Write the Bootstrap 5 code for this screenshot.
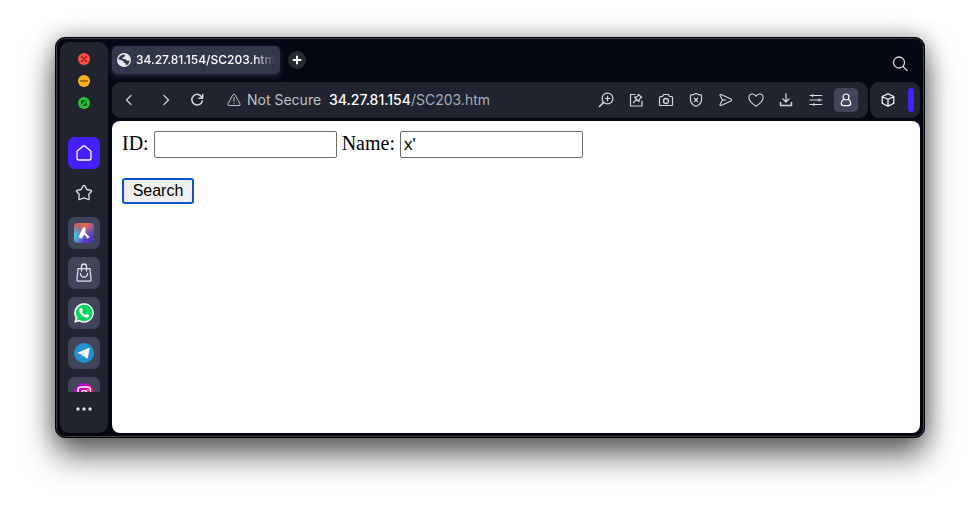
<!DOCTYPE html>
<html lang="en">
<head>
<meta charset="utf-8">
<meta name="viewport" content="width=device-width, initial-scale=1">
<title>34.27.81.154/SC203.htm</title>
<link rel="stylesheet" href="https://cdn.jsdelivr.net/npm/bootstrap@5.3.0/dist/css/bootstrap.min.css">
<style>
body{background:#fff;min-height:100vh;padding:37px 55px 73px;font-family:Inter,"Liberation Sans",sans-serif;overflow:hidden}
svg{display:block;fill:none;stroke:currentColor;stroke-width:1;stroke-linecap:round;stroke-linejoin:round}
svg.solid{stroke:none}
button{color:inherit}
.window{background:#050713;border:1px solid #000;border-radius:10px;padding:4px;gap:4px;box-shadow:inset 0 0 0 1px #3c3e48,0 18px 32px rgba(0,0,0,.58),0 0 22px rgba(0,0,0,.32)}
.sidebar{width:48px;background:#21232e;border-radius:9px;padding:11px 0 7px}
.lights{gap:10px;margin-bottom:28px}
.lights button,.tool,.side,.plus{border:0;padding:0;background:none;display:flex;align-items:center;justify-content:center;flex:none}
.lights button{width:12px;height:12px}
.sideapps{gap:8px;height:255px;overflow:hidden}
.side{width:32px;height:32px;border-radius:7px;color:#dfe1ea}
.side.tile{background:#41455a}
.side.active{background:#4520ff;color:#fff}
.side.more{height:34px}
.tabs{height:40px;padding:0 8px 0 0}
.tab-item{width:168px;height:28px;margin-top:4px;background:#33374b;border-radius:5px;padding:0 5px;gap:5px;color:#fff;box-shadow:0 2px 6px rgba(90,92,105,.45)}
.tab-title{font-size:12px;line-height:16px;font-weight:500;white-space:nowrap;overflow:hidden;-webkit-mask-image:linear-gradient(90deg,#000 85%,transparent);mask-image:linear-gradient(90deg,#000 85%,transparent)}
.plus{width:18px;height:18px;border-radius:50%;background:#292b33;margin:9px 0 0 8px;color:#fff}
.toolbars{gap:2px;margin-bottom:3px}
.toolbar{height:36px;background:#21232e;border-radius:9px}
.navtools{padding:0 10px 0 5px}
.tool{width:24px;height:24px;border-radius:5px;color:#d3d6da}
.actions{gap:6px}
.forward{margin:0 7px 0 13px}
.address{font-size:14px;line-height:20px;color:#bfc2c3;margin-left:18px;gap:6px;white-space:nowrap}
.address a{color:#9fb0ba;text-decoration:none;margin-left:2px}
.address strong{color:#fff;font-weight:500}
.profile{background:#41455a;color:#fff}
.extras{width:50px;padding:0 6px}
.accent{width:6px;height:24px;border-radius:3px;background:#4520ff}
.page{background:#fff;border-radius:8px;padding:10px;color:#000;font:20px/24px "Liberation Serif",serif}
.page input{width:183px;height:27px;border:1px solid #6b6b6b;border-radius:2px;padding:1px 3px;font:17px/20px "Liberation Sans",sans-serif;color:#000;outline:0}
.fields{gap:5px;margin-bottom:20px}
.search{border:2px solid #0756c9;border-radius:3px;background:#efefef;padding:0;font:16px/22px "Liberation Sans",sans-serif;color:#000;height:26px;width:72px}
</style>
</head>
<body class="d-flex flex-column">
<div class="window d-flex flex-grow-1">
  <aside class="sidebar d-flex flex-column align-items-center flex-shrink-0">
    <div class="lights d-flex flex-column">
      <button aria-label="Close"><svg width="12" height="12"><circle cx="6" cy="6" r="6" fill="#ff5148" stroke="none"/><path d="M3.500 3.500l5 5m0-5l-5 5" stroke="#8e1510" stroke-width="1.300"/></svg></button>
      <button aria-label="Minimize"><svg width="12" height="12"><circle cx="6" cy="6" r="6" fill="#ffb022" stroke="none"/><path d="M2.500 6h7" stroke="#8f5a0b" stroke-width="1.500"/></svg></button>
      <button aria-label="Full screen"><svg width="12" height="12"><circle cx="6" cy="6" r="6" fill="#28c135" stroke="none"/><path d="M3 7.800V4q0-1 1-1h3.800zM9 4.200V8q0 1-1 1H4.200z" fill="#0b6514" stroke="none"/></svg></button>
    </div>
    <nav class="sideapps d-flex flex-column" aria-label="Apps">
      <button class="side active" aria-label="Home"><svg width="20" height="20"><path d="M3.500 7.800Q3 8.300 3 9v6q0 2 2 2h10q2 0 2-2V9q0-.7-.5-1.200L11.300 3.400q-1.300-.9-2.600 0z" stroke-width="1.300"/></svg></button>
      <button class="side" aria-label="Bookmarks"><svg width="20" height="20"><path d="M10 2.300q.6 0 .9.600l2 3.600 4 .8q1.100.3.400 1.200l-2.600 3 .5 4.200q0 1.100-1 .8L10 14.900l-4.200 1.600q-1 .3-1-.8l.5-4.200-2.600-3q-.7-.9.400-1.200l4-.8 2-3.600q.3-.6.900-.6z" stroke-width="1.300"/></svg></button>
      <button class="side tile" aria-label="Aria"><svg class="solid" width="20" height="20"><defs><linearGradient id="ga" x1="0" y1="0" x2="1" y2="1"><stop stop-color="#df6351"/><stop offset=".5" stop-color="#6759b5"/><stop offset="1" stop-color="#4b24c5"/></linearGradient><radialGradient id="gb" cx="0" cy=".65" r=".55"><stop stop-color="#3ed0ed"/><stop offset="1" stop-color="#3ed0ed" stop-opacity="0"/></radialGradient><radialGradient id="gc" cx=".6" cy="0" r=".55"><stop stop-color="#ff6840"/><stop offset="1" stop-color="#ff6840" stop-opacity="0"/></radialGradient></defs><rect width="20" height="20" rx="4" fill="url(#ga)"/><rect width="20" height="20" rx="4" fill="url(#gb)"/><rect width="20" height="20" rx="4" fill="url(#gc)"/><path d="M8.800 4.500h2.700v5.200l4 4.300-2 1.600-3.300-4.200-2.500 4.200-3-1.400z" fill="#fff"/></svg></button>
      <button class="side tile" aria-label="Shopping"><svg width="20" height="20"><path d="M4 5.600h12l1 11.200q0 1.300-1.200 1.300H4.200q-1.200 0-1.200-1.300zM7.500 8V3.200Q7.500 1 10 1t2.500 2.200V8M6.300 10.500q.5 3.600 3.700 3.600t3.700-3.600" stroke-width="1.300"/></svg></button>
      <button class="side tile" aria-label="WhatsApp"><svg class="solid" width="20" height="20"><path d="M.3 19.800L1.600 15A9.800 9.800 0 1 1 5.200 18.500z" fill="#fff"/><path d="M2.300 17.700l1-3.100A8.300 8.300 0 1 1 5.500 16.800z" fill="#05d362"/><path d="M6.500 5.100q-.7.400-1.100 1.600-.5 3 3.200 6.100 3.600 2.900 6 1.200 1.200-.9.800-1.900l-2.200-1.200q-.5-.1-1.300 1-.5.400-2.100-.8-1.700-1.400-1.800-2.200l.9-1.400-1-2.200q-.5-.6-1.400-.2z" fill="#fff"/></svg></button>
      <button class="side tile" aria-label="Telegram"><svg class="solid" width="20" height="20"><circle cx="10" cy="10" r="10" fill="#248fd0"/><path d="M3 9.900L14.800 4.900q1-.2.800.9l-1.700 9q-.4 1-1.300.4L7.700 11.600z" fill="#fff"/><path d="M7.300 11.200L13 7.100 9 11.900l-1 3.200z" fill="#b9d8ec"/></svg></button>
      <button class="side tile" aria-label="Instagram"><svg width="20" height="20"><defs><linearGradient id="gi" x1="0" y1="0" x2="1" y2="1"><stop stop-color="#7a16f2"/><stop offset=".4" stop-color="#d800b0"/><stop offset=".7" stop-color="#ff0059"/></linearGradient></defs><circle cx="10" cy="10" r="10" fill="url(#gi)" stroke="none"/><rect x="4" y="4" width="12.500" height="12.500" rx="3" stroke="#fff" stroke-width="1.400"/><circle cx="10.200" cy="10.200" r="2.700" stroke="#fff" stroke-width="1.400"/><circle cx="13.900" cy="6.700" r=".8" fill="#fff" stroke="none"/></svg></button>
    </nav>
    <button class="side more" aria-label="More"><svg class="solid" width="20" height="20"><g fill="#dfe1ea"><circle cx="4" cy="10" r="1.700"/><circle cx="10" cy="10" r="1.700"/><circle cx="16" cy="10" r="1.700"/></g></svg></button>
  </aside>
  <div class="d-flex flex-column flex-grow-1">
    <div class="tabs d-flex align-items-start">
      <div class="tab-item d-flex align-items-center">
        <svg class="solid flex-shrink-0" width="14" height="14"><circle cx="7" cy="7" r="7" fill="#e6e8ea"/><path d="M6.300 1.400L8.200 2 7.700 3.600 6 4.500 5.500 6h2.700l1.300 1.500 2.900.2q.1 3.100-3.300 4.500L8.200 10l-1.500-.5-.4-1.600L3.800 7 1.300 6.300Q1.900 2.700 6.300 1.400z" fill="#353a4c"/></svg>
        <span class="tab-title">34.27.81.154/SC203.htm</span>
      </div>
      <button class="plus" aria-label="New tab"><svg width="10" height="10"><path d="M5 1.500v7M1.500 5h7" stroke-width="2"/></svg></button>
      <button class="tool ms-auto mt-2" aria-label="Search tabs"><svg class="mt-1" width="18" height="18"><circle cx="8" cy="7.500" r="5.500" stroke-width="1.300"/><path d="M12 11.500l4 4" stroke-width="1.300"/></svg></button>
    </div>
    <div class="toolbars d-flex">
      <div class="toolbar navtools d-flex align-items-center flex-grow-1">
        <button class="tool" aria-label="Back"><svg width="16" height="16"><path d="M10 3.500L5.500 8l4.500 4.500" stroke-width="1.200"/></svg></button>
        <button class="tool forward" aria-label="Forward"><svg width="16" height="16"><path d="M6 3.500l4.500 4.500L6 12.500" stroke-width="1.200"/></svg></button>
        <button class="tool" aria-label="Reload"><svg width="16" height="16"><path d="M13 5.500A5.300 5.300 0 1 0 13.300 9" stroke-width="1.500"/><path d="M13.700 2.500v3.700H10" stroke-width="1.400"/></svg></button>
        <div class="address d-flex align-items-center">
          <svg width="14" height="14"><path d="M6 1.700q1-1.200 2 0l5 9.200q.6 1.600-.9 1.600H1.900q-1.500 0-.9-1.600zM7 4.500v4M7 10.300v.4"/></svg>
          <span>Not Secure</span>
          <a href="#"><strong>34.27.81.154</strong>/SC203.htm</a>
        </div>
        <div class="actions d-flex ms-auto">
          <button class="tool" aria-label="Zoom"><svg width="16" height="16"><circle cx="9.500" cy="6.500" r="5.400" stroke-width="1.200"/><path d="M9.500 4.200v4.600M7.200 6.500h4.600" stroke-width="1.200"/><path d="M5.600 10.400L1.500 14.500" stroke-width="1.500"/></svg></button>
          <button class="tool" aria-label="Edit page"><svg width="16" height="16"><path d="M7 2.500H2.500v11.500h11.500V9" stroke-width="1.200"/><path d="M10.500 2.300l3.200 3.200-1 .4-1.500 1.500-.2 2.200L6.500 5.200l2.200-.2 1.500-1.500zM8.600 7.400L5.500 10.500" stroke-width="1.200"/></svg></button>
          <button class="tool" aria-label="Snapshot"><svg width="16" height="16"><path d="M2.500 4.500h2l1-2h5l1 2h2q1 0 1 1v7q0 1-1 1h-11q-1 0-1-1v-7q0-1 1-1z" stroke-width="1.200"/><circle cx="8" cy="9" r="2.500" stroke-width="1.300"/></svg></button>
          <button class="tool" aria-label="Privacy"><svg width="16" height="16"><path d="M8 1.500q2.500 1.500 5.500 1.500v5q0 4-5.500 6.500Q2.500 12 2.500 8V3q3 0 5.500-1.500zM6.300 6.200l3.400 3.400m0-3.400L6.300 9.600" stroke-width="1.200"/></svg></button>
          <button class="tool" aria-label="Share"><svg width="16" height="16"><path d="M3 2.500l10 4.600q1.500.9 0 1.800L3 13.500q-1.300.3-.9-1L4.500 8 2.100 3.500q-.4-1.300.9-1zM4.500 8h3.500" stroke-width="1.100"/></svg></button>
          <button class="tool" aria-label="Favorite"><svg width="16" height="16"><path d="M8 14.300Q.9 9.500.9 5.700.9 2 4.500 2 7 2 8 4.300 9 2 11.500 2q3.600 0 3.600 3.700 0 3.800-7.100 8.600z" stroke-width="1.100"/></svg></button>
          <button class="tool" aria-label="Downloads"><svg width="16" height="16"><path d="M8 2v8M5 7l3 3 3-3" stroke-width="1.300"/><path d="M2.500 10.500v3h11v-3" stroke-width="1.500"/></svg></button>
          <button class="tool" aria-label="Settings"><svg width="16" height="16"><path d="M2 3.500h12M2 8h12M2 12.500h12M4.500 2.500v2M11 7v2M6 11.500v2" stroke-width="1.200"/></svg></button>
          <button class="tool profile" aria-label="Profile"><svg width="16" height="16"><circle cx="8" cy="5" r="3" stroke-width="1.200"/><path d="M5.700 7.300Q3.300 8.800 3.300 11q0 2.700 2.200 2.700h5q2.200 0 2.200-2.700 0-2.200-2.400-3.700" stroke-width="1.200"/></svg></button>
        </div>
      </div>
      <div class="toolbar extras d-flex align-items-center justify-content-between">
        <button class="tool text-white" aria-label="Extensions"><svg width="16" height="16"><path d="M8 1.800l5.800 2.700v6.800L8 14.200l-5.800-2.900V4.500zM2.200 4.700L8 7.300l5.800-2.600M8 7.300v6.900" stroke-width="1.200"/></svg></button>
        <span class="accent"></span>
      </div>
    </div>
    <main class="page flex-grow-1">
      <form onsubmit="return false">
        <div class="fields d-flex align-items-start">
          <label for="idField">ID:</label><input id="idField" type="text">
          <label for="nameField">Name:</label><input id="nameField" type="text" value="x'">
        </div>
        <button class="search d-block" type="submit">Search</button>
      </form>
    </main>
  </div>
</div>
<script src="https://cdn.jsdelivr.net/npm/bootstrap@5.3.0/dist/js/bootstrap.bundle.min.js"></script>
</body>
</html>
